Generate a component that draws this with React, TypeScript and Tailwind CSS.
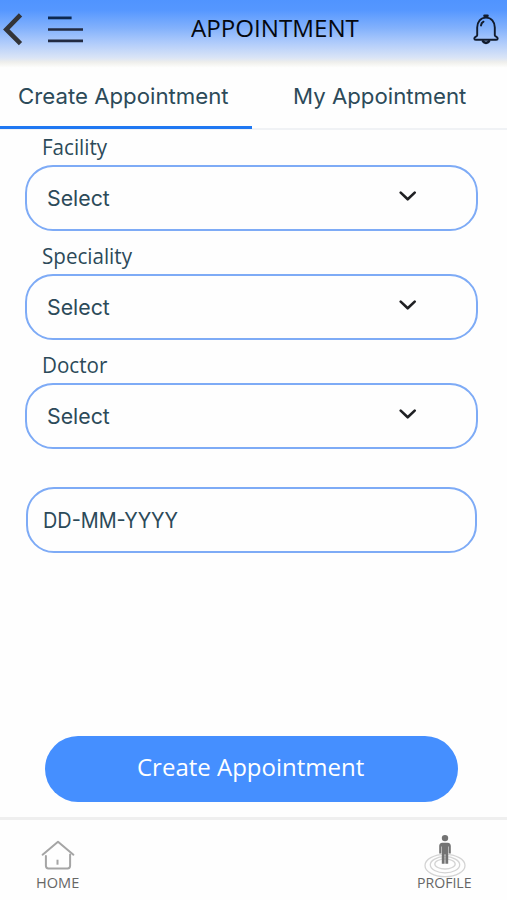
import React from "react";

const humanist = "font-['Open_Sans','Noto_Sans',sans-serif]";
const grotesk = "font-['Inter','Liberation_Sans',sans-serif]";

function Header() {
  return (
    <header className="flex h-[68px] shrink-0 items-start bg-[linear-gradient(to_bottom,#5094ff_0px,#5597ff_10px,#82b1fc_28px,#adcafb_42px,#dbe5f6_58px,#eeeeec_62px,#f4f4f1_64px,#ffffff_68px)]">
      <svg className="mt-3 ml-[2px] h-[36px] w-[22px]" viewBox="0 0 22 36" fill="none" stroke="#333438" strokeWidth="4.6">
        <path d="M18.5 2.8 4.3 17.4 18.5 31.6" />
      </svg>
      <svg className="mt-3 ml-[22px] h-[36px] w-[40px]" viewBox="0 0 40 36" fill="none">
        <path d="M2 5.9H25.6" stroke="#0d2850" strokeWidth="2.8" />
        <path d="M2 17.5H37M2 28.9H37" stroke="#232b42" strokeWidth="2.6" />
      </svg>
      <h1 className={`mt-[12px] ml-[105px] w-[168px] whitespace-nowrap text-[24.5px] leading-[32px] text-[#05080f] ${humanist}`}>
        <span className="inline-block origin-left scale-x-[0.985]">APPOINTMENT</span>
      </h1>
      <svg className="mt-3 ml-[113px] h-[34px] w-[28px]" viewBox="0 0 28 34" fill="none" stroke="#111b2d" strokeWidth="1.9" strokeLinecap="round" strokeLinejoin="round">
        <path d="M5.2 23.2V15.5C5.2 9.5 8.8 5.6 14 5.6s8.8 3.9 8.8 9.9v7.7c0 1.6 2.9 1.3 2.9 3.3 0 .9-.6 1.3-1.5 1.3H3.8c-.9 0-1.5-.4-1.5-1.3 0-2 2.9-1.7 2.9-3.3Z" />
        <path d="M12.5 3.8h3M11 29.3c1.4 2.1 4.6 2.1 6 0" strokeWidth="2.6" />
        <path d="M9 13.4c.2-1.8 1.1-3 2.5-3.7" strokeWidth="2" />
      </svg>
    </header>
  );
}

function Tabs() {
  return (
    <nav className={`flex h-[62px] shrink-0 items-start border-b-2 border-[#f0f2f5] text-[22px] leading-[56px] text-[#2c4a59] ${grotesk}`}>
      <button className="h-[61px] w-[252px] whitespace-nowrap border-b-[3px] border-[#1f78f2] pb-[2px] pl-[17.5px] text-left">
        <span className="inline-block origin-left scale-x-[1.01]">Create Appointment</span>
      </button>
      <button className="w-[255px] whitespace-nowrap pl-[41px] text-left">
        <span className="inline-block origin-left scale-x-[1.01]">My Appointment</span>
      </button>
    </nav>
  );
}

function SelectField({ label }: { label: string }) {
  return (
    <div className="flex h-[109px] flex-col">
      <label className={`h-[34px] pl-[42px] text-[21px] leading-[32px] text-[#2c4a59] ${humanist}`}>
        <span className="inline-block origin-left scale-x-[0.98]">{label}</span>
      </label>
      <div className="ml-[25px] flex h-[66px] w-[453px] rounded-[28px] border-2 border-[#7eabf6] pl-[20px]">
        <span className={`w-[352px] text-[21.3px] leading-[62px] text-[#2c4a59] ${grotesk}`}>
          <span className="inline-block origin-left">Select</span>
        </span>
        <svg className="mt-[22px] h-[14px] w-[18px]" viewBox="0 0 18 14" fill="none" stroke="#1f2023" strokeWidth="2.6" strokeLinecap="round" strokeLinejoin="round">
          <path d="m1.7 3.6 7 6.7 7-6.7" />
        </svg>
      </div>
    </div>
  );
}

function HomeIcon() {
  return (
    <svg className="h-[31px] w-[34px]" viewBox="0 0 34 31" fill="none" stroke="#a5a5a5" strokeWidth="2" strokeLinecap="round" strokeLinejoin="round">
      <path d="M1.6 14.7 17 1.7l15.4 13" />
      <path d="M4.9 16v9.8c0 1.6 1 2.6 2.6 2.6h19c1.6 0 2.6-1 2.6-2.6V14.6" />
      <path d="M16.5 19.7v5" strokeLinecap="butt" />
    </svg>
  );
}

function ProfileIcon() {
  return (
    <svg className="h-[44px] w-[42px]" viewBox="0 0 42 44" fill="none">
      <g stroke="#d4d4d4" strokeWidth="1.3">
        <ellipse cx="21" cy="31.5" rx="20" ry="11.2" />
        <ellipse cx="21" cy="30.8" rx="14.7" ry="8.1" />
        <ellipse cx="21" cy="30" rx="10.2" ry="5" />
      </g>
      <g fill="#737373">
        <circle cx="21" cy="4.1" r="3.2" />
        <path d="M18.3 8.7h5.4c2 0 3.1 1.3 3.1 3.2v7.6h-2.1v-7h-.5v17.3h-2.8V20h-.8v9.8h-2.8V12.5h-.5v7h-2.1v-7.6c0-1.9 1.1-3.2 3.1-3.2Z" />
      </g>
    </svg>
  );
}

function BottomNav() {
  return (
    <footer className={`flex h-[83px] shrink-0 justify-between border-t-[3px] border-[#efefef] text-[15px] leading-[20px] text-[#666666] ${humanist}`}>
      <div className="ml-[36px] flex w-[44px] flex-col items-center pt-[20px]">
        <HomeIcon />
        <span className="mt-[1px] w-full whitespace-nowrap">
          <span className="inline-block origin-left scale-x-[0.97]">HOME</span>
        </span>
      </div>
      <div className="mr-[35px] flex w-[55px] flex-col items-center pt-[14px]">
        <ProfileIcon />
        <span className="-mt-[6px] w-full whitespace-nowrap">
          <span className="inline-block origin-left scale-x-[0.94]">PROFILE</span>
        </span>
      </div>
    </footer>
  );
}

export default function App() {
  return (
    <div className="flex h-[900px] w-[507px] flex-col overflow-hidden bg-[#fefefe]">
      <Header />
      <Tabs />
      <main className="flex flex-1 flex-col pt-[1px]">
        <SelectField label="Facility" />
        <SelectField label="Speciality" />
        <SelectField label="Doctor" />
        <div className={`mt-[29px] ml-[26px] h-[66px] w-[451px] rounded-[28px] border-2 border-[#7eabf6] pl-[15px] text-[21px] leading-[64px] text-[#2c4a59] ${grotesk}`}>
          <span className="inline-block origin-left scale-x-[0.945] whitespace-nowrap">DD-MM-YYYY</span>
        </div>
        <button className={`mt-[183px] ml-[45px] h-[66px] w-[413px] rounded-[33px] bg-[#458fff] pb-[4px] pl-[92px] text-left text-[24px] leading-[62px] text-white ${humanist}`}>
          <span className="inline-block origin-left whitespace-nowrap">Create Appointment</span>
        </button>
      </main>
      <BottomNav />
    </div>
  );
}
